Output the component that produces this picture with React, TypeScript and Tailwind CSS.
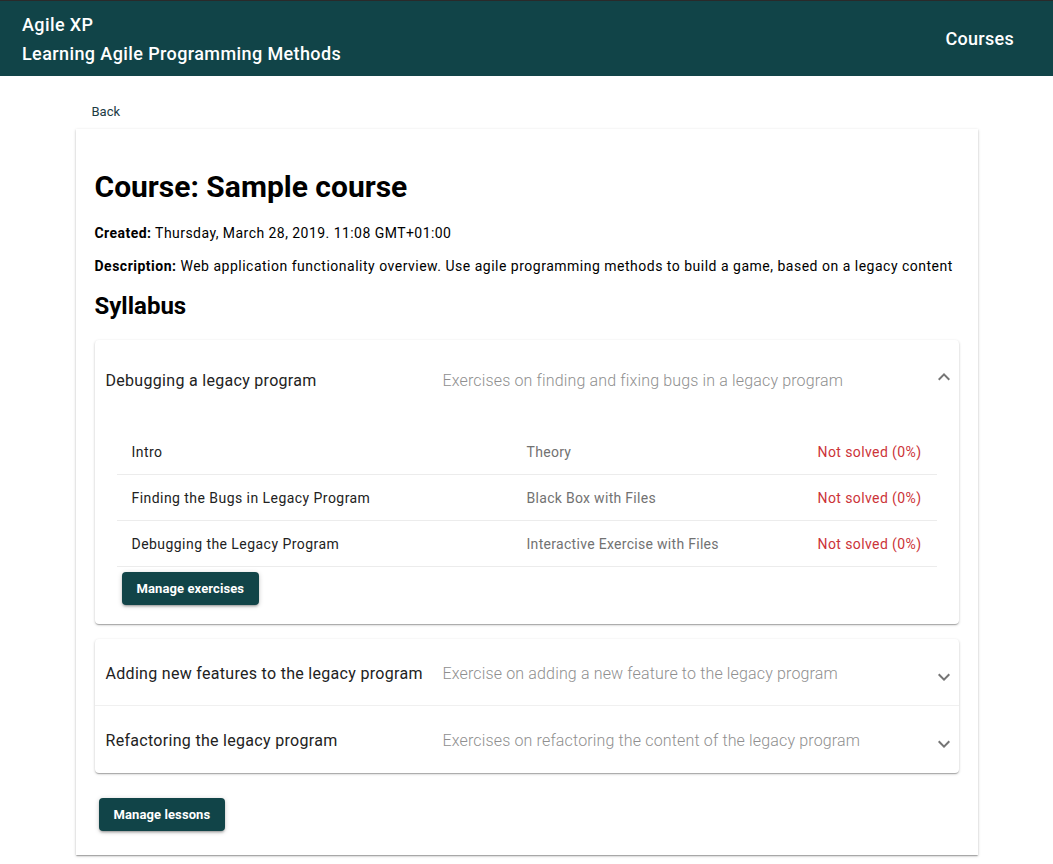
import React from 'react';

const paperShadow =
  'shadow-[0_1px_3px_0_rgba(0,0,0,0.2),0_1px_1px_0_rgba(0,0,0,0.14),0_2px_1px_-1px_rgba(0,0,0,0.12)]';

const ExpandIcon = ({ up }: { up?: boolean }) => (
  <svg
    viewBox="0 0 24 24"
    className={`h-6 w-6 fill-[#757575] ${up ? 'rotate-180' : ''}`}
  >
    <path d="M16.59 8.59L12 13.17 7.41 8.59 6 10l6 6 6-6z" />
  </svg>
);

const exercises = [
  { name: 'Intro', type: 'Theory', status: 'Not solved (0%)' },
  { name: 'Finding the Bugs in Legacy Program', type: 'Black Box with Files', status: 'Not solved (0%)' },
  { name: 'Debugging the Legacy Program', type: 'Interactive Exercise with Files', status: 'Not solved (0%)' },
];

const Summary = ({ title, text, up }: { title: string; text: string; up?: boolean }) => (
  <div className="flex items-center pl-[11px]">
    <div className="w-[337px] shrink-0 text-[16px] tracking-[0.3px] text-[#222]">{title}</div>
    <div className="flex-1 text-[16px] font-light tracking-[0.15px] text-[#8f8f8f]">{text}</div>
    <div className={`flex w-[30px] justify-center ${up ? '-mt-[8px]' : 'mt-[6px]'}`}>
      <ExpandIcon up={up} />
    </div>
  </div>
);

const Button = ({ children }: { children: React.ReactNode }) => (
  <button className="h-[33px] rounded-[4px] bg-[#114448] px-[15px] text-[13px] font-bold tracking-[0.1px] text-white shadow-[0_1px_5px_0_rgba(0,0,0,0.2),0_2px_2px_0_rgba(0,0,0,0.14),0_3px_1px_-2px_rgba(0,0,0,0.12)]">
    {children}
  </button>
);

export default function App() {
  return (
    <div className="min-h-screen bg-white font-['Roboto',sans-serif] text-black">
      {/* Header */}
      <header className="flex items-center justify-between border-t border-[#2a2a2a] bg-[#114448] pb-[8px] pl-[22px] pr-[39px] pt-[9px] text-white">
        <div className="text-[18px] font-medium leading-[29px] tracking-[0.4px]">
          <div>Agile XP</div>
          <div>Learning Agile Programming Methods</div>
        </div>
        <div className="-mt-px text-[18px] font-medium tracking-[0.3px]">Courses</div>
      </header>

      <main className="mx-auto w-[902px]">
        <div className="pb-[8px] pl-[16px] pt-[27px] text-[13px] leading-[18px] text-[#1b3a44]">Back</div>

        <div className={`bg-white px-[19px] pb-[24px] pt-[40px] ${paperShadow}`}>
          <h1 className="text-[30px] font-bold leading-[36px]">Course: Sample course</h1>
          <p className="mt-[18px] text-[14px] leading-[20px] tracking-[0.45px]">
            <span className="font-bold">Created:</span> Thursday, March 28, 2019. 11:08 GMT+01:00
          </p>
          <p className="mt-[13px] text-[14px] leading-[20px] tracking-[0.5px]">
            <span className="font-bold">Description:</span> Web application functionality overview. Use agile
            programming methods to build a game, based on a legacy content
          </p>
          <h2 className="mt-[14px] text-[24px] font-bold leading-[32px]">Syllabus</h2>

          {/* Expanded lesson */}
          <div className={`mt-[18px] rounded-[4px] bg-white ${paperShadow}`}>
            <div className="flex h-[81px] flex-col justify-center">
              <Summary
                title="Debugging a legacy program"
                text="Exercises on finding and fixing bugs in a legacy program"
                up
              />
            </div>
            <div className="px-[22px] pb-[19px] pt-[8px]">
              {exercises.map((e) => (
                <div
                  key={e.name}
                  className="grid h-[46px] grid-cols-[395px_1fr_auto] items-center border-b border-[#ececec] px-[15px] pt-px text-[14px]"
                >
                  <span className="tracking-[0.45px] text-[#222]">{e.name}</span>
                  <span className="tracking-[0.3px] text-[#727272]">{e.type}</span>
                  <span className="tracking-[0.4px] text-[#cc3338]">{e.status}</span>
                </div>
              ))}
              <div className="mt-[5px] pl-[5px]">
                <Button>Manage exercises</Button>
              </div>
            </div>
          </div>

          {/* Collapsed lessons */}
          <div className={`mt-[15px] rounded-[4px] bg-white ${paperShadow}`}>
            <div className="flex h-[67px] flex-col justify-center border-b border-[#f0f0f0] pt-[3px]">
              <Summary
                title="Adding new features to the legacy program"
                text="Exercise on adding a new feature to the legacy program"
              />
            </div>
            <div className="flex h-[67px] flex-col justify-center pt-[3px]">
              <Summary
                title="Refactoring the legacy program"
                text="Exercises on refactoring the content of the legacy program"
              />
            </div>
          </div>

          <div className="mt-[25px] pl-[4px]">
            <Button>Manage lessons</Button>
          </div>
        </div>
      </main>
    </div>
  );
}
